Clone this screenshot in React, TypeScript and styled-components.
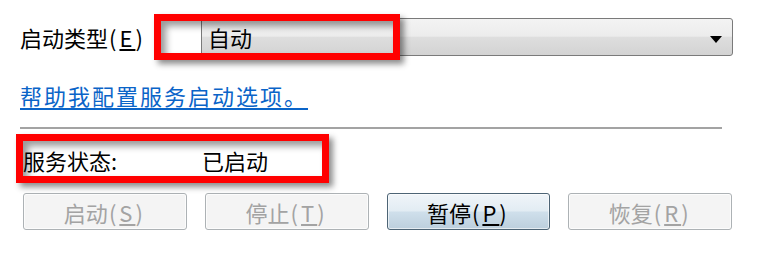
import React from "react";
import styled, { createGlobalStyle } from "styled-components";

const Global = createGlobalStyle`
  html, body { margin: 0; padding: 0; background: #ffffff; }
  body { width: 760px; height: 254px; overflow: hidden; }
  * { box-sizing: border-box; }
`;

const Page = styled.div`
  position: relative;
  width: 760px;
  height: 254px;
  padding: 18px 0 0 20px;
  font-family: "Noto Sans CJK SC", "Noto Sans", sans-serif;
  font-size: 22px;
  color: #000;
`;

const Row = styled.div`
  display: flex;
  align-items: center;
`;

const StartRow = styled(Row)`
  height: 38px;
`;

const Label = styled.span<{ $w?: number }>`
  display: inline-block;
  width: ${(p) => (p.$w ? `${p.$w}px` : "auto")};
  line-height: 24px;
  white-space: nowrap;
`;

const Mnemonic = styled.span`
  letter-spacing: 3px;
  margin-left: 1px;
`;

const Combo = styled.div`
  position: relative;
  width: 532px;
  height: 38px;
  border: 1px solid #7a7a7a;
  border-radius: 3px;
  background: linear-gradient(
    to bottom,
    #f3f3f3 0%,
    #ececec 48%,
    #dedede 50%,
    #d3d3d3 100%
  );
  display: flex;
  align-items: center;
  padding-left: 6px;
  line-height: 24px;
`;

const Arrow = styled.svg`
  position: absolute;
  right: 10px;
  top: 17px;
`;

const Link = styled.a`
  display: inline-block;
  margin-top: 27px;
  line-height: 24px;
  letter-spacing: 2px;
  color: #0a64c8;
  text-decoration: underline;
  text-underline-offset: 3px;
  cursor: pointer;
`;

const Separator = styled.div`
  margin-top: 16px;
  width: 702px;
  height: 2px;
  background: #a3a3a3;
`;

const StatusRow = styled(Row)`
  margin-top: 19px;
  padding-left: 3px;
  height: 24px;
`;

const Buttons = styled.div`
  margin-top: 21px;
  margin-left: 3px;
  width: 709px;
  display: grid;
  grid-template-columns: repeat(4, 1fr);
  column-gap: 18px;
`;

const Btn = styled.button<{ $active?: boolean }>`
  height: 37px;
  border-radius: 3px;
  font-family: inherit;
  font-size: 22px;
  line-height: 24px;
  padding: 0;
  border: 1px solid ${(p) => (p.$active ? "#4d6475" : "#adb2b5")};
  color: ${(p) => (p.$active ? "#000" : "#a3a3a3")};
  background: ${(p) =>
    p.$active
      ? "linear-gradient(to bottom, #f0f5f9 0%, #e2ecf3 48%, #cfdfeb 52%, #bccfdd 100%)"
      : "#f4f4f4"};
  box-shadow: ${(p) =>
    p.$active ? "inset 0 0 0 1px rgba(255,255,255,0.6)" : "inset 0 0 0 1px #fcfcfc"};
`;

const Highlight = styled.div<{ $x: number; $y: number; $w: number; $h: number }>`
  position: absolute;
  left: ${(p) => p.$x}px;
  top: ${(p) => p.$y}px;
  width: ${(p) => p.$w}px;
  height: ${(p) => p.$h}px;
  border: 7px solid #ff0000;
  box-shadow: 4px 4px 6px rgba(0, 0, 0, 0.45),
    inset 5px 5px 7px rgba(0, 0, 0, 0.4);
  pointer-events: none;
`;

export default function App() {
  return (
    <>
      <Global />
      <Page>
        <StartRow>
          <Label $w={181}>
            启动类型<Mnemonic>(<u>E</u>)</Mnemonic>
          </Label>
          <Combo>
            自动
            <Arrow width="12" height="7" viewBox="0 0 12 7">
              <polygon points="0,0 12,0 6,7" fill="#000" />
            </Arrow>
          </Combo>
        </StartRow>
        <Link>帮助我配置服务启动选项。</Link>
        <Separator />
        <StatusRow>
          <Label $w={179}>服务状态:</Label>
          <Label>已启动</Label>
        </StatusRow>
        <Buttons>
          <Btn disabled>
            启动<Mnemonic>(<u>S</u>)</Mnemonic>
          </Btn>
          <Btn disabled>
            停止<Mnemonic>(<u>T</u>)</Mnemonic>
          </Btn>
          <Btn $active>
            暂停<Mnemonic>(<u>P</u>)</Mnemonic>
          </Btn>
          <Btn disabled>
            恢复<Mnemonic>(<u>R</u>)</Mnemonic>
          </Btn>
        </Buttons>
        <Highlight $x={154} $y={14} $w={246} $h={46} />
        <Highlight $x={16} $y={134} $w={313} $h={49} />
      </Page>
    </>
  );
}
